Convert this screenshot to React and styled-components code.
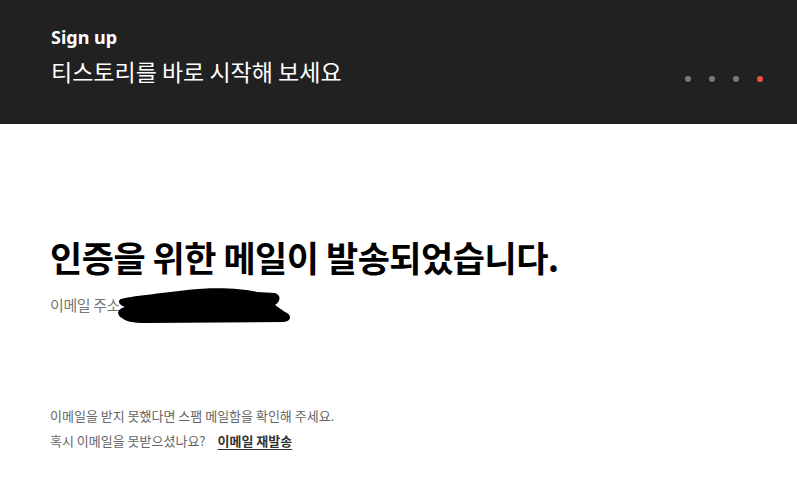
import React from "react";
import styled, { createGlobalStyle } from "styled-components";

const GlobalStyle = createGlobalStyle`
  body {
    margin: 0;
    background: #ffffff;
    font-family: "Noto Sans", "Noto Sans CJK KR", sans-serif;
  }
`;

const Header = styled.header`
  height: 124px;
  background: #212121;
  padding: 0 34px 0 51px;
  box-sizing: border-box;
  display: flex;
  align-items: flex-start;
  justify-content: space-between;
`;

const HeaderText = styled.div`
  padding-top: 24px;
  color: #ffffff;
`;

const Kicker = styled.div`
  font-family: "Noto Sans", sans-serif;
  font-weight: 700;
  font-size: 18px;
  line-height: 26px;
`;

const Tagline = styled.div`
  font-family: "Noto Sans CJK KR", sans-serif;
  font-size: 23px;
  line-height: 32px;
  letter-spacing: 0;
  margin-top: 5px;
`;

const Dots = styled.div`
  display: flex;
  gap: 18px;
  margin-top: 76px;
`;

const Dot = styled.span`
  width: 6px;
  height: 6px;
  border-radius: 50%;
  background: ${(p) => (p.$active ? "#f0503c" : "#7a7a7a")};
`;

const Main = styled.main`
  padding: 106px 50px 0;
`;

const Heading = styled.h1`
  margin: 0;
  font-family: "Noto Sans CJK KR", sans-serif;
  font-weight: 600;
  font-size: 35px;
  line-height: 54px;
  letter-spacing: -0.5px;
  color: #000000;
`;

const EmailLine = styled.div`
  display: flex;
  align-items: center;
  margin-top: 1px;
  font-family: "Noto Sans CJK KR", sans-serif;
  font-size: 15px;
  color: #777777;
  letter-spacing: -0.4px;
`;

const Redaction = styled.svg`
  width: 174px;
  height: 37px;
  margin-left: -3px;
  margin-top: 2px;
`;

const Notes = styled.div`
  margin-top: 83px;
  display: flex;
  flex-direction: column;
  gap: 7px;
  font-family: "Noto Sans CJK KR", sans-serif;
  font-size: 13px;
  line-height: 18px;
  letter-spacing: 0;
  color: #666666;
`;

const ResendLink = styled.a`
  margin-left: 12px;
  color: #333333;
  font-weight: 700;
  text-decoration: underline;
  text-underline-offset: 3px;
`;

export default function App() {
  return (
    <>
      <GlobalStyle />
      <Header>
        <HeaderText>
          <Kicker>Sign up</Kicker>
          <Tagline>티스토리를 바로 시작해 보세요</Tagline>
        </HeaderText>
        <Dots>
          <Dot />
          <Dot />
          <Dot />
          <Dot $active />
        </Dots>
      </Header>
      <Main>
        <Heading>인증을 위한 메일이 발송되었습니다.</Heading>
        <EmailLine>
          이메일 주소
          <Redaction viewBox="0 0 174 37">
            <path
              d="M4 12 C20 8 50 6 70 3 C95 0 125 1 140 5 L158 6 C164 8 164 14 158 18 L168 25 C175 27 175 35 166 35 L30 36 C15 36 8 34 5 31 C-1 28 0 22 8 20 C2 18 0 14 4 12 Z"
              fill="#000"
            />
          </Redaction>
        </EmailLine>
        <Notes>
          <div>이메일을 받지 못했다면 스팸 메일함을 확인해 주세요.</div>
          <div>
            혹시 이메일을 못받으셨나요?
            <ResendLink href="#">이메일 재발송</ResendLink>
          </div>
        </Notes>
      </Main>
    </>
  );
}
